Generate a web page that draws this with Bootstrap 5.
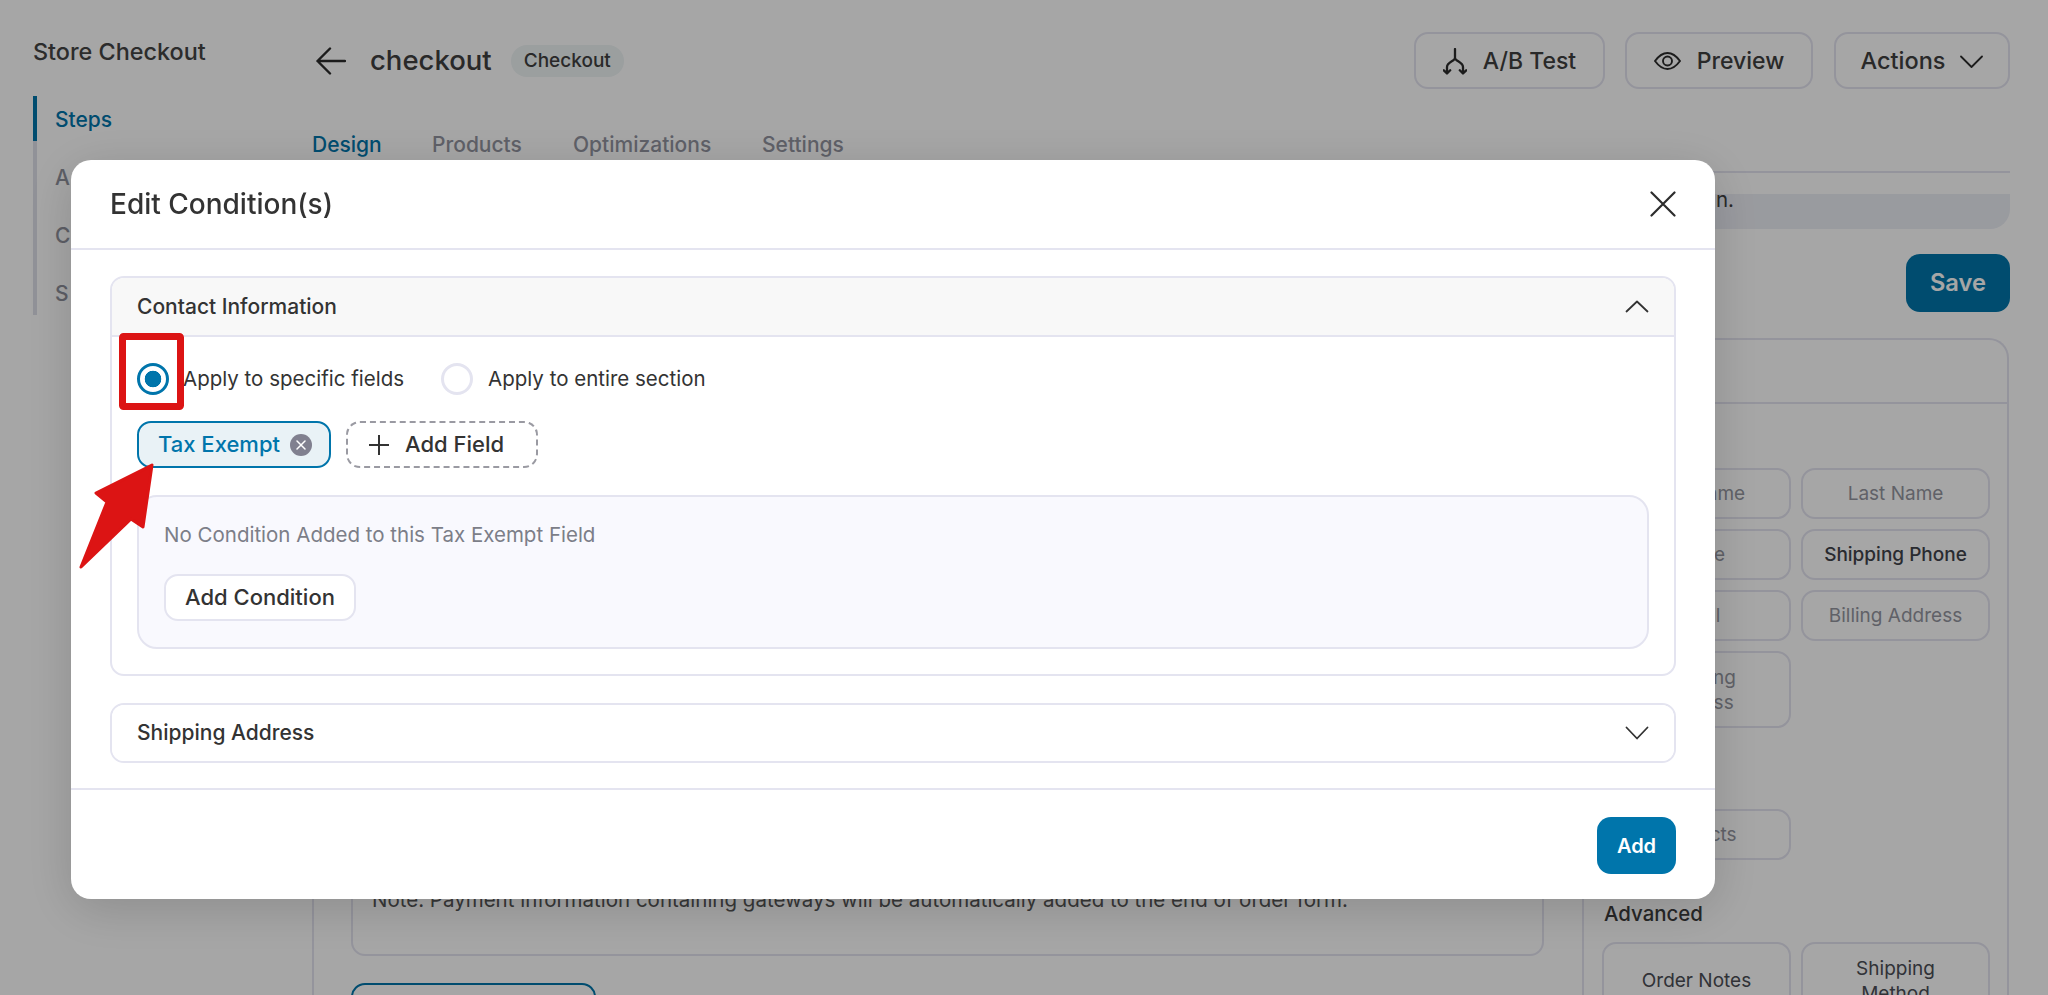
<!doctype html>
<html lang="en">
<head>
<meta charset="utf-8">
<title>Edit Condition(s)</title>
<link href="https://cdn.jsdelivr.net/npm/bootstrap@5.3.0/dist/css/bootstrap.min.css" rel="stylesheet">
<style>
html,body{height:995px;overflow:hidden}
body{font-family:Inter,"Liberation Sans",sans-serif;color:#3c3c3c;background:#fff}
/* page underneath */
.shell{display:flex;height:995px}
.side{width:279px;margin-left:33px;flex:none;padding-top:36px}
.side-title{font-size:23.400px;font-weight:500;line-height:32px;margin-bottom:28px;color:#444}
.side-list{border-left:4px solid #dfe0ea;height:219px;display:flex;flex-direction:column;gap:10px}
.side-item{height:48px;line-height:48px;padding-left:18px;margin-left:-4px;border-left:4px solid transparent;font-size:21px;font-weight:500;color:#8f919c}
.side-item.is-on{border-left-color:#0075ab;color:#0075ab;height:45px;margin-bottom:3px}
.main{width:1698px;flex:none;padding-top:32px}
.top-row{height:57px;display:flex;align-items:center}
.page-name{font-size:27.500px;font-weight:500;color:#404040;margin-left:24px;line-height:1;padding-top:1px}
.type-tag{margin-left:19px;height:32px;padding:1px 13px 0;border-radius:16px;background:#eef4f5;font-size:19px;font-weight:500;color:#404040;display:flex;align-items:center}
.head-btn{height:57px;border:2px solid #e4e4f0;border-radius:14px;background:transparent;font-size:23px;font-weight:500;color:#404040;display:flex;align-items:center;justify-content:center;padding:1px 0 0}
.ab{width:191px;gap:16px}
.pv{width:188px;margin-left:20px;gap:16px}
.ac.head-btn{width:176px;margin-left:21px;gap:15px;font-size:23.500px}
.tab-row{display:flex;height:84px;padding-top:40px;border-bottom:2px solid #e4e4f0;font-size:21px;font-weight:500;color:#92949f;line-height:32px}
.tab-row span.t1{color:#0075ab;width:120px}
.tab-row span.t2{width:141px}
.tab-row span.t3{width:189px}
.note-band{height:35px;margin-top:21px;background:#eceef5;border-radius:0 0 20px 20px;padding-left:1404px;font-size:20.500px;line-height:12px;color:#404040}
.save-row{display:flex;justify-content:flex-end;margin-top:25px}
.save-btn{width:104px;height:58px;border:0;border-radius:14px;background:#0075ab;color:#fff;font-size:23.700px;font-weight:600;padding:0}
.work{margin-top:26px;margin-right:1px;height:700px;border:2px solid #e4e4f0;border-bottom:0;border-radius:20px 20px 0 0}
.work-head{height:64px;border-bottom:2px solid #e4e4f0}
.work-body{display:flex;height:620px}
.left-pane{width:1270px;flex:none;border-right:2px solid #e4e4f0;padding:467px 38px 0 37px}
.note-box{height:85px;border:2px solid #e4e4f0;border-radius:14px;padding:13px 19px;font-size:20.500px;line-height:28px;color:#555;white-space:nowrap}
.outline-btn{display:block;width:245px;height:60px;margin-top:27px;border:2px solid #0075ab;border-radius:14px;background:transparent;color:#0075ab;font-size:18px;padding:0}
.right-pane{flex:1;padding:64px 0 0 18px;font-size:19px}
.tiles{display:grid;grid-template-columns:189px 189px;gap:10px}
.tile{min-height:51px;border:2px solid #e4e4f0;border-radius:14px;display:flex;align-items:center;justify-content:center;text-align:center;color:#94969f;font-size:19px;line-height:25px;padding:0 10px}
.tile.on{color:#3f434b;font-weight:500;padding:0 4px}
.tile.dark{color:#4b4d55}
.tile-tall{min-height:77px}
.group-label{font-size:20.400px;font-weight:500;color:#3c3c3c;line-height:28px}
.gl-1{margin:40px 0 13px}
.gl-2{margin:40px 0 14px 2px}
/* modal */
.modal-backdrop.show{--bs-backdrop-opacity:.35;opacity:.35}
.cond-dialog.modal-dialog{width:1644px;max-width:1644px;margin:160px 0 0 71px}
.cond-content.modal-content{border:0;border-radius:20px;box-shadow:0 10px 50px rgba(0,0,0,.16);height:739px;color:#333}
.cond-head.modal-header{padding:28px 39px;height:90px;border-bottom:2px solid #e4e4f0;border-radius:20px 20px 0 0}
.cond-head .modal-title{font-size:28px;font-weight:500;line-height:32px;color:#333}
.cond-body.modal-body{padding:26px 39px 0;height:538px;flex:none}
.ac-box.accordion-item{border:2px solid #e4e4f0;border-radius:14px;background:#fff;overflow:hidden;color:#333}
.ac-box+.ac-box{margin-top:27px}
.ac-head.accordion-button{height:57px;padding:0 25px;background:#f8f8f8;color:#333;font-size:21px;font-weight:500;box-shadow:none;display:flex;justify-content:space-between;border-radius:0}
.ac-head.accordion-button::after{display:none}
.ac-head.accordion-button.collapsed{background:#fff;height:56px}
.ac-inner{border-top:2px solid #e4e4f0;padding:0 25px 20px;height:339px}
.radio-row{height:84px;display:flex;align-items:center;font-size:20.500px;line-height:32px;color:#333;margin:0}
.radio-row .form-check-input{width:32px;height:32px;margin:0;border:3px solid #e4e4f0;flex:none;background-color:#fff}
.radio-row .form-check-input:checked[type=radio]{border-color:#0075ab;background-color:#fff;--bs-form-check-bg-image:radial-gradient(circle,#0075ab 0 8px,transparent 8.6px);background-image:radial-gradient(circle,#0075ab 0 8px,transparent 8.6px)}
.radio-row label{margin-left:14px}
.radio-row .form-check-input.r2{margin-left:37px}
.radio-row .r2+label{margin-left:15px}
.chips{display:flex;gap:15px;height:47px}
.chip-on{width:194px;border:2px solid #0075ab;border-radius:14px;background:#e9f2f6;color:#0075ab;font-size:22px;font-weight:500;display:flex;align-items:center;gap:10px;padding:0 0 0 19px}
.chip-x{width:22px;height:22px;flex:none}
.chip-add{width:192px;border:2px dashed #9a9aa2;border-radius:14px;background:#fff;color:#333;font-size:22px;font-weight:500;display:flex;align-items:center;gap:16px;padding:0 0 0 21px}
.cond-panel{margin-top:27px;height:154px;border:2px solid #e4e4f0;border-radius:20px;background:#f9f9fe;padding:24px 25px 0}
.cond-panel p{font-size:20.500px;line-height:28px;color:#7c7e88;margin:0 0 25px}
.add-cond{width:192px;height:47px;padding:0;border:2px solid #e4e4f0;border-radius:14px;background:#fff;color:#333;font-size:22px;font-weight:500}
.cond-foot.modal-footer{padding:27px 39px;border-top:2px solid #e4e4f0;height:111px;align-items:flex-start;margin-top:0}
.add-btn{width:79px;height:57px;margin:0;padding:0;border:0;border-radius:14px;background:#0075ab;color:#fff;font-size:20px;font-weight:600}
.marks{position:fixed;left:0;top:0;width:2048px;height:995px;z-index:1060;pointer-events:none}
</style>
</head>
<body>
<div class="shell">
  <aside class="side">
    <div class="side-title">Store Checkout</div>
    <div class="side-list">
      <div class="side-item is-on">Steps</div>
      <div class="side-item">A</div>
      <div class="side-item">C</div>
      <div class="side-item">S</div>
    </div>
  </aside>
  <main class="main">
    <div class="top-row">
      <svg width="30" height="28" viewBox="0 0 30 28" fill="none" stroke="#2c2c2c" stroke-width="2.4" stroke-linecap="round" stroke-linejoin="round" class="ms-1"><path d="M29 14H1.500M14 1.500 1.500 14 14 26.500"/></svg>
      <div class="page-name">checkout</div>
      <div class="type-tag">Checkout</div>
      <div class="ms-auto d-flex">
        <button class="head-btn ab" type="button">
          <svg width="24" height="27" viewBox="0 0 24 27" fill="none" stroke="#2c2c2c" stroke-width="2.3" stroke-linecap="round" stroke-linejoin="round"><path d="M12 1v9C12 13 4 14 4 19v6.500M20 25.500V19C20 14 12 13 12 10M.8 22.300 4 25.500l3.200-3.200M16.800 22.300l3.200 3.200 3.200-3.200"/></svg>
          <span>A/B Test</span>
        </button>
        <button class="head-btn pv" type="button">
          <svg width="27" height="18" viewBox="0 0 27 18" fill="none" stroke="#2c2c2c" stroke-width="1.9"><path d="M1 9C5 3.500 9 1 13.500 1S22 3.500 26 9c-4 5.500-8 8-12.500 8S5 14.500 1 9Z"/><circle cx="13.500" cy="9" r="4.500"/></svg>
          <span>Preview</span>
        </button>
        <button class="head-btn ac" type="button">
          <span>Actions</span>
          <svg width="23" height="13" viewBox="0 0 23 13" fill="none" stroke="#2c2c2c" stroke-width="1.8" stroke-linecap="round" stroke-linejoin="round"><path d="M1 1.500 11.500 12 22 1.500"/></svg>
        </button>
      </div>
    </div>
    <div class="tab-row"><span class="t1">Design</span><span class="t2">Products</span><span class="t3">Optimizations</span><span>Settings</span></div>
    <div class="note-band">n.</div>
    <div class="save-row"><button class="save-btn" type="button">Save</button></div>
    <div class="work">
      <div class="work-head"></div>
      <div class="work-body">
        <div class="left-pane">
          <div class="note-box">Note: Payment information containing gateways will be automatically added to the end of order form.</div>
          <button class="outline-btn" type="button"></button>
        </div>
        <div class="right-pane">
          <div class="tiles">
            <div class="tile">First Name</div><div class="tile">Last Name</div>
            <div class="tile">Phone</div><div class="tile on">Shipping Phone</div>
            <div class="tile">Email</div><div class="tile">Billing Address</div>
            <div class="tile tile-tall">Shipping<br>Address</div>
          </div>
          <div class="group-label gl-1">Products</div>
          <div class="tiles"><div class="tile">Products</div></div>
          <div class="group-label gl-2">Advanced</div>
          <div class="tiles"><div class="tile tile-tall dark">Order Notes</div><div class="tile tile-tall dark">Shipping<br>Method</div></div>
        </div>
      </div>
    </div>
  </main>
</div>

<div class="modal-backdrop show"></div>
<div class="modal d-block" tabindex="-1" role="dialog">
  <div class="modal-dialog cond-dialog">
    <div class="modal-content cond-content">
      <div class="modal-header cond-head">
        <h5 class="modal-title">Edit Condition(s)</h5>
        <button type="button" class="btn p-0 border-0 ms-auto d-flex" aria-label="Close">
          <svg width="26" height="26" viewBox="0 0 26 26" fill="none" stroke="#2c2c2c" stroke-width="2.200" stroke-linecap="round"><path d="M1.500 1.500 24.500 24.500M24.500 1.500 1.500 24.500"/></svg>
        </button>
      </div>
      <div class="modal-body cond-body">
        <div class="accordion">
          <div class="accordion-item ac-box">
            <button class="accordion-button ac-head" type="button">
              <span>Contact Information</span>
              <svg width="24" height="13" viewBox="0 0 24 13" fill="none" stroke="#333" stroke-width="1.800" stroke-linecap="round" stroke-linejoin="round"><path d="M1.500 11.500 12 1.500l10.500 10"/></svg>
            </button>
            <div class="ac-inner">
              <div class="radio-row">
                <input class="form-check-input" type="radio" name="scope" id="r1" checked>
                <label for="r1">Apply to specific fields</label>
                <input class="form-check-input r2" type="radio" name="scope" id="r2">
                <label for="r2">Apply to entire section</label>
              </div>
              <div class="chips">
                <div class="chip-on">
                  <span>Tax Exempt</span>
                  <svg class="chip-x" viewBox="0 0 22 22"><circle cx="11" cy="11" r="11" fill="#80808f"/><path d="M7 7l8 8M15 7l-8 8" stroke="#fff" stroke-width="1.500" stroke-linecap="round"/></svg>
                </div>
                <div class="chip-add">
                  <svg width="20" height="20" viewBox="0 0 20 20" fill="none" stroke="#333" stroke-width="2"><path d="M10 0v20M0 10h20"/></svg>
                  <span>Add Field</span>
                </div>
              </div>
              <div class="cond-panel">
                <p>No Condition Added to this Tax Exempt Field</p>
                <button class="add-cond" type="button">Add Condition</button>
              </div>
            </div>
          </div>
          <div class="accordion-item ac-box">
            <button class="accordion-button collapsed ac-head" type="button">
              <span>Shipping Address</span>
              <svg width="24" height="14" viewBox="0 0 24 14" fill="none" stroke="#333" stroke-width="1.800" stroke-linecap="round" stroke-linejoin="round"><path d="M1.500 1.500 12 12.500 22.500 1.500"/></svg>
            </button>
          </div>
        </div>
      </div>
      <div class="modal-footer cond-foot">
        <button class="add-btn" type="button">Add</button>
      </div>
    </div>
  </div>
</div>
<svg class="marks" viewBox="0 0 2048 995">
  <rect x="122.500" y="336.500" width="58" height="70" fill="none" stroke="#dc1414" stroke-width="7" rx="1"/>
  <path d="M152 465 96 493 107 502 81 567 131 519 143 527Z" fill="#dc1414" stroke="#dc1414" stroke-width="3" stroke-linejoin="round"/>
</svg>
<script src="https://cdn.jsdelivr.net/npm/bootstrap@5.3.0/dist/js/bootstrap.bundle.min.js"></script>
</body>
</html>
